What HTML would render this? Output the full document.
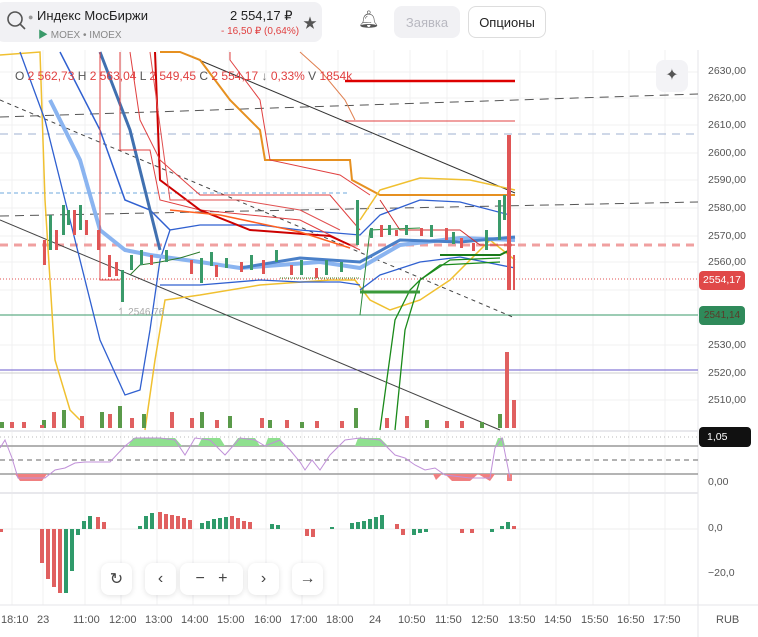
<!DOCTYPE html>
<html><head><meta charset="utf-8"><style>
*{margin:0;padding:0;box-sizing:border-box}
body{width:758px;height:637px;overflow:hidden;background:#fff;font-family:"Liberation Sans","Noto Sans CJK SC",sans-serif;position:relative}
.hdr{position:absolute;left:0;top:0;width:758px;height:50px;background:#fff}
.card{position:absolute;left:-4px;top:2px;width:326px;height:40px;background:#f1f1f4;border-radius:8px}
.btn{position:absolute;top:6px;height:32px;border-radius:8px;font-size:13px;display:flex;align-items:center;justify-content:center}
.ax{position:absolute;font-size:10.5px;color:#555;left:708px}
.tl{position:absolute;top:614px;font-size:11px;color:#555}
.nav{position:absolute;top:563px;height:32px;background:#fff;border-radius:8px;box-shadow:0 1px 6px rgba(0,0,0,.12);font-size:16px;color:#444;display:flex;align-items:center;justify-content:space-around}
</style></head><body>
<svg width="758" height="637" style="position:absolute;left:0;top:0">
<!-- grid -->
<g stroke="#f0f0f2" stroke-width="1">
<line x1="0" y1="72" x2="698" y2="72"/><line x1="0" y1="98" x2="698" y2="98"/><line x1="0" y1="125" x2="698" y2="125"/><line x1="0" y1="153" x2="698" y2="153"/><line x1="0" y1="180" x2="698" y2="180"/><line x1="0" y1="208" x2="698" y2="208"/><line x1="0" y1="236" x2="698" y2="236"/><line x1="0" y1="262" x2="698" y2="262"/><line x1="0" y1="290" x2="698" y2="290"/><line x1="0" y1="345" x2="698" y2="345"/><line x1="0" y1="373" x2="698" y2="373"/><line x1="0" y1="400" x2="698" y2="400"/>
<line x1="12" y1="50" x2="12" y2="605"/><line x1="43" y1="50" x2="43" y2="605"/><line x1="85" y1="50" x2="85" y2="605"/><line x1="121" y1="50" x2="121" y2="605"/><line x1="157" y1="50" x2="157" y2="605"/><line x1="193" y1="50" x2="193" y2="605"/><line x1="229" y1="50" x2="229" y2="605"/><line x1="266" y1="50" x2="266" y2="605"/><line x1="302" y1="50" x2="302" y2="605"/><line x1="338" y1="50" x2="338" y2="605"/><line x1="374" y1="50" x2="374" y2="605"/><line x1="410" y1="50" x2="410" y2="605"/><line x1="447" y1="50" x2="447" y2="605"/><line x1="483" y1="50" x2="483" y2="605"/><line x1="520" y1="50" x2="520" y2="605"/><line x1="556" y1="50" x2="556" y2="605"/><line x1="593" y1="50" x2="593" y2="605"/><line x1="629" y1="50" x2="629" y2="605"/><line x1="665" y1="50" x2="665" y2="605"/>
</g>
<line x1="698" y1="50" x2="698" y2="637" stroke="#e6e6ea"/>
<line x1="0" y1="605" x2="758" y2="605" stroke="#e6e6ea"/>
<line x1="0" y1="431" x2="698" y2="431" stroke="#e8e8ec" stroke-width="2"/>
<line x1="0" y1="493" x2="698" y2="493" stroke="#e8e8ec" stroke-width="2"/>
<!-- horizontal levels -->
<line x1="0" y1="134" x2="698" y2="134" stroke="#9fb0d0" stroke-dasharray="8,6"/>
<line x1="0" y1="193" x2="350" y2="193" stroke="#6fa8dc" stroke-dasharray="4,3"/>
<line x1="0" y1="245" x2="698" y2="245" stroke="#f0a0a0" stroke-width="3" stroke-dasharray="8,6"/>
<line x1="0" y1="279" x2="698" y2="279" stroke="#e05050" stroke-dasharray="1,2"/>
<line x1="0" y1="315" x2="698" y2="315" stroke="#3a9a6a"/>
<line x1="0" y1="370" x2="698" y2="370" stroke="#6a5acd"/><line x1="0" y1="373" x2="698" y2="373" stroke="#ccc"/>
<line x1="345" y1="81" x2="515" y2="81" stroke="#d00" stroke-width="2.5"/>
<line x1="345" y1="121" x2="515" y2="121" stroke="#e04040"/>
<polyline points="0,117 698,94" stroke="#555" fill="none" stroke-dasharray="9,6"/>
<polyline points="0,216 698,202" stroke="#555" fill="none" stroke-dasharray="9,6"/>
<!-- diagonal lines -->
<polyline points="180,52 515,193" stroke="#333" fill="none"/>
<polyline points="0,100 515,318" stroke="#444" fill="none" stroke-dasharray="4,4"/>
<polyline points="0,220 500,430" stroke="#444" fill="none"/>
<!-- orange -->
<polyline points="160,52 180,52 200,60 230,100 260,130 265,160 350,160 352,180 380,195 515,195" stroke="#e69020" stroke-width="2" fill="none"/>
<polyline points="300,52 320,70 345,100 355,120" stroke="#e08050" fill="none"/>
<!-- yellow bollinger -->
<polyline points="0,55 40,52 45,200 55,360 70,410 80,420" stroke="#f0c030" stroke-width="1.5" fill="none"/>
<polyline points="145,430 155,360 165,300 200,295 260,285 330,280 355,280 370,300 390,310 420,300 450,280 490,240 515,260" stroke="#f0c030" stroke-width="1.5" fill="none"/>
<polyline points="360,220 380,190 420,178 470,180 515,190" stroke="#f0c030" stroke-width="1.5" fill="none"/>
<!-- blue -->
<polyline points="20,52 45,120 75,240 100,340 125,395 140,390 150,330 160,260 170,230 200,225 260,225 300,230 360,235 380,215 420,200 460,202 510,215" stroke="#3060d0" stroke-width="1.3" fill="none"/>
<polyline points="360,290 380,275 420,262 460,257 515,268" stroke="#3060d0" stroke-width="1.3" fill="none"/>
<polyline points="160,285 200,285 260,280 300,282 340,282 360,285" stroke="#3060d0" stroke-width="1.3" fill="none"/>
<polyline points="60,52 100,130 125,200 150,210 170,230" stroke="#3060d0" stroke-width="1.5" fill="none"/>
<polyline points="100,52 130,130 160,250" stroke="#4070b0" stroke-width="3" fill="none"/>
<polyline points="50,100 80,160 100,230 125,250 150,255 200,262 240,268 280,265 320,262 360,268 400,245 460,238 515,240" stroke="#8ab4f0" stroke-width="4" fill="none"/>
<polyline points="240,268 300,258 360,262 400,240 460,242 515,237" stroke="#4a80c8" stroke-width="3" fill="none"/>
<!-- reds -->
<polyline points="100,52 100,280 120,280" stroke="#e04040" fill="none"/>
<polyline points="120,52 120,150 150,150 160,200 200,210 300,220 340,240 360,250" stroke="#e04040" fill="none"/>
<polyline points="155,52 160,180 200,210 250,230 330,236 350,245" stroke="#c00" stroke-width="2" fill="none"/>
<polyline points="150,52 170,200 240,200 300,210 340,230" stroke="#e05050" fill="none"/>
<polyline points="130,52 140,120 160,160 200,195 330,195 360,230" stroke="#e04040" fill="none"/>
<polyline points="170,210 220,215 300,232 350,248" stroke="#ff6020" stroke-width="1.5" fill="none"/>
<polyline points="230,52 230,60 260,100 270,160 340,175 370,195" stroke="#e04040" fill="none"/>
<polyline points="380,200 400,230 460,230 480,245 515,245" stroke="#d03030" fill="none"/>
<!-- greens -->
<polyline points="360,315 370,230 420,228" stroke="#2a8a3a" fill="none"/>
<polyline points="380,430 395,320 410,290 420,280 440,265 500,262" stroke="#1a8a1a" stroke-width="1.3" fill="none"/>
<polyline points="395,430 405,330 420,280 450,260 500,258" stroke="#1a8a1a" stroke-width="1.3" fill="none"/>
<polyline points="440,255 500,255 510,250" stroke="#1a7a1a" stroke-width="2" fill="none"/>
<line x1="360" y1="292" x2="420" y2="292" stroke="#3a9a3a" stroke-width="3"/>
<polyline points="130,275 140,265 160,262 180,258 200,252" stroke="#2a7a2a" fill="none"/>
<line x1="280" y1="278" x2="360" y2="278" stroke="#4a8a2a" stroke-dasharray="1,1"/>
<!-- candles -->
<g fill="#e05555">
<rect x="43" y="240" width="3" height="25"/><rect x="55" y="230" width="3" height="20"/><rect x="73" y="210" width="3" height="25"/><rect x="85" y="220" width="3" height="15"/><rect x="97" y="230" width="3" height="20"/><rect x="108" y="255" width="3" height="22"/><rect x="115" y="262" width="3" height="14"/><rect x="150" y="255" width="3" height="10"/><rect x="190" y="260" width="3" height="14"/><rect x="215" y="265" width="3" height="12"/><rect x="240" y="262" width="3" height="10"/><rect x="262" y="260" width="3" height="14"/><rect x="290" y="265" width="3" height="10"/><rect x="315" y="268" width="3" height="10"/><rect x="380" y="225" width="3" height="12"/><rect x="395" y="230" width="3" height="6"/><rect x="420" y="228" width="3" height="8"/><rect x="445" y="228" width="3" height="12"/><rect x="460" y="238" width="3" height="10"/><rect x="472" y="243" width="3" height="8"/><rect x="507" y="135" width="4" height="155"/><rect x="513" y="255" width="2" height="35"/>
</g>
<g fill="#3a9a6a">
<rect x="49" y="215" width="3" height="35"/><rect x="62" y="205" width="3" height="30"/><rect x="67" y="210" width="3" height="15"/><rect x="79" y="205" width="3" height="25"/><rect x="121" y="270" width="3" height="32"/><rect x="130" y="255" width="3" height="15"/><rect x="140" y="250" width="3" height="15"/><rect x="165" y="250" width="3" height="12"/><rect x="200" y="258" width="3" height="25"/><rect x="210" y="252" width="3" height="14"/><rect x="225" y="258" width="3" height="10"/><rect x="250" y="255" width="3" height="15"/><rect x="275" y="250" width="3" height="12"/><rect x="300" y="260" width="3" height="15"/><rect x="325" y="260" width="3" height="15"/><rect x="340" y="262" width="3" height="10"/><rect x="356" y="200" width="3" height="45"/><rect x="370" y="228" width="3" height="10"/><rect x="388" y="225" width="3" height="10"/><rect x="405" y="225" width="3" height="10"/><rect x="430" y="225" width="3" height="12"/><rect x="452" y="232" width="3" height="12"/><rect x="485" y="230" width="3" height="20"/><rect x="498" y="200" width="3" height="40"/><rect x="503" y="195" width="3" height="25"/>
</g>
<!-- volume -->
<g fill="#5a9a4a">
<rect x="0" y="422" width="4" height="6"/><rect x="42" y="420" width="4" height="8"/><rect x="62" y="410" width="4" height="18"/><rect x="100" y="412" width="4" height="16"/><rect x="118" y="406" width="4" height="22"/><rect x="142" y="414" width="4" height="14"/><rect x="200" y="412" width="4" height="16"/><rect x="228" y="416" width="4" height="12"/><rect x="268" y="420" width="4" height="8"/><rect x="300" y="422" width="4" height="6"/><rect x="354" y="408" width="4" height="20"/><rect x="425" y="420" width="4" height="8"/><rect x="480" y="422" width="4" height="6"/><rect x="498" y="414" width="4" height="14"/>
</g>
<g fill="#e06060">
<rect x="10" y="422" width="4" height="6"/><rect x="22" y="422" width="4" height="6"/><rect x="40" y="425" width="4" height="3"/><rect x="52" y="412" width="4" height="16"/><rect x="80" y="416" width="4" height="12"/><rect x="108" y="414" width="4" height="14"/><rect x="130" y="418" width="4" height="10"/><rect x="170" y="412" width="4" height="16"/><rect x="190" y="418" width="4" height="10"/><rect x="215" y="420" width="4" height="8"/><rect x="260" y="418" width="4" height="10"/><rect x="285" y="420" width="4" height="8"/><rect x="315" y="421" width="4" height="7"/><rect x="340" y="421" width="4" height="7"/><rect x="385" y="418" width="4" height="10"/><rect x="405" y="416" width="4" height="12"/><rect x="445" y="421" width="4" height="7"/><rect x="460" y="421" width="4" height="7"/><rect x="505" y="352" width="4" height="76"/><rect x="512" y="400" width="4" height="28"/>
</g>
<!-- RSI -->
<line x1="0" y1="437" x2="698" y2="437" stroke="#bbb" stroke-dasharray="1,3"/>
<line x1="0" y1="446" x2="698" y2="446" stroke="#999" stroke-width="1.5"/>
<line x1="0" y1="460" x2="698" y2="460" stroke="#999" stroke-width="1.5" stroke-dasharray="5,4"/>
<line x1="0" y1="474" x2="698" y2="474" stroke="#888" stroke-width="1.2"/>
<g fill="#8fe08f"><polygon points="128,446 133,438 175,438 182,446"/><polygon points="198,446 202,438 220,438 225,446"/><polygon points="232,446 238,438 255,438 260,446"/><polygon points="265,446 268,438 280,438 284,446"/><polygon points="355,446 358,438 380,438 388,446"/><polygon points="495,446 498,438 503,438 505,446"/></g>
<g fill="#f08080"><polygon points="15,474 20,481 42,481 47,474"/><polygon points="433,474 436,480 442,474"/><polygon points="445,474 452,481 470,481 478,474 490,481 495,474"/><polygon points="507,474 507,481 512,481 512,474"/></g>
<polyline points="0,448 5,440 12,458 18,478 45,478 55,470 65,468 75,463 85,462 95,462 110,462 125,446 135,438 150,438 160,438 175,440 185,455 195,438 210,440 225,455 240,438 255,440 265,446 280,440 290,450 300,462 305,470 312,460 320,470 330,455 345,440 360,438 380,440 395,455 405,458 415,465 425,470 435,468 445,475 470,478 490,478 495,448 502,438 510,478" stroke="#c090d8" fill="none"/>
<!-- MACD -->
<line x1="0" y1="529" x2="698" y2="529" stroke="#eee"/>
<g fill="#e06060">
<rect x="0" y="529" width="3" height="3"/><rect x="40" y="529" width="4" height="34"/><rect x="46" y="529" width="4" height="50"/><rect x="52" y="529" width="4" height="58"/><rect x="58" y="529" width="4" height="64"/><rect x="96" y="517" width="4" height="12"/><rect x="102" y="522" width="4" height="7"/><rect x="158" y="512" width="4" height="17"/><rect x="164" y="514" width="4" height="15"/><rect x="170" y="515" width="4" height="14"/><rect x="176" y="516" width="4" height="13"/><rect x="182" y="518" width="4" height="11"/><rect x="188" y="520" width="4" height="9"/><rect x="230" y="516" width="4" height="13"/><rect x="236" y="518" width="4" height="11"/><rect x="242" y="521" width="4" height="8"/><rect x="248" y="522" width="4" height="7"/><rect x="305" y="529" width="4" height="7"/><rect x="311" y="529" width="4" height="8"/><rect x="395" y="524" width="4" height="5"/><rect x="401" y="529" width="4" height="6"/><rect x="460" y="529" width="4" height="4"/><rect x="470" y="529" width="4" height="4"/><rect x="512" y="526" width="4" height="3"/>
</g>
<g fill="#2f9a6a">
<rect x="64" y="529" width="4" height="64"/><rect x="70" y="529" width="4" height="42"/><rect x="76" y="529" width="4" height="6"/><rect x="82" y="521" width="4" height="8"/><rect x="88" y="516" width="4" height="13"/><rect x="138" y="526" width="4" height="3"/><rect x="144" y="516" width="4" height="13"/><rect x="150" y="513" width="4" height="16"/><rect x="200" y="523" width="4" height="6"/><rect x="206" y="521" width="4" height="8"/><rect x="212" y="519" width="4" height="10"/><rect x="218" y="518" width="4" height="11"/><rect x="224" y="517" width="4" height="12"/><rect x="270" y="524" width="4" height="5"/><rect x="276" y="525" width="4" height="4"/><rect x="330" y="527" width="4" height="2"/><rect x="350" y="523" width="4" height="6"/><rect x="356" y="522" width="4" height="7"/><rect x="362" y="521" width="4" height="8"/><rect x="368" y="519" width="4" height="10"/><rect x="374" y="517" width="4" height="12"/><rect x="380" y="515" width="4" height="14"/><rect x="412" y="529" width="4" height="6"/><rect x="418" y="529" width="4" height="4"/><rect x="424" y="529" width="4" height="3"/><rect x="490" y="529" width="4" height="3"/><rect x="500" y="526" width="4" height="3"/><rect x="506" y="522" width="4" height="7"/>
</g>
</svg>
<div class="hdr">
<div class="card">
<svg width="22" height="22" style="position:absolute;left:9px;top:7px"><circle cx="10" cy="10" r="7" stroke="#555" stroke-width="1.6" fill="none"/><line x1="15" y1="15" x2="20" y2="20" stroke="#555" stroke-width="1.6"/></svg>
<div style="position:absolute;left:32px;top:6px;font-size:13px;color:#222"><span style="font-size:9px;color:#999">&#9679;</span> Индекс МосБиржи</div>
<div style="position:absolute;left:42px;top:24px;font-size:10px;color:#888"><span style="color:#3a9a6a">&#9654;</span> MOEX • IMOEX</div>
<div style="position:absolute;left:234px;top:6px;font-size:13px;color:#222">2 554,17 ₽</div>
<div style="position:absolute;left:225px;top:24px;font-size:10px;color:#e04040">- 16,50 ₽ (0,64%)</div>
<div style="position:absolute;left:307px;top:11px;font-size:14px;color:#555">★</div>
</div>
<div style="position:absolute;left:358px;top:10px;font-size:17px;color:#555">🔔︎</div>
<div class="btn" style="left:394px;width:66px;background:#f1f1f4;color:#b8b8c0">Заявка</div>
<div class="btn" style="left:468px;width:78px;border:1px solid #ddd;color:#222">Опционы</div>
</div>
<div style="position:absolute;left:15px;top:69px;font-size:12px;color:#555">O <span style="color:#e04040">2 562,73</span> H <span style="color:#e04040">2 563,04</span> L <span style="color:#e04040">2 549,45</span> C <span style="color:#e04040">2 554,17</span> <span style="color:#777">↓</span><span style="color:#e04040"> 0,33%</span> V <span style="color:#e04040">1854k</span></div>
<div style="position:absolute;left:656px;top:60px;width:32px;height:32px;background:#f3f3f6;border-radius:8px;font-size:16px;color:#555;text-align:center;line-height:32px">✦</div>
<div style="position:absolute;left:117px;top:307px;font-size:10px;color:#aaa">↿ 2546,76</div>
<div class="ax" style="top:65px">2630,00</div><div class="ax" style="top:92px">2620,00</div><div class="ax" style="top:119px">2610,00</div><div class="ax" style="top:147px">2600,00</div><div class="ax" style="top:174px">2590,00</div><div class="ax" style="top:202px">2580,00</div><div class="ax" style="top:230px">2570,00</div><div class="ax" style="top:256px">2560,00</div><div class="ax" style="top:339px">2530,00</div><div class="ax" style="top:367px">2520,00</div><div class="ax" style="top:394px">2510,00</div><div class="ax" style="top:476px">0,00</div><div class="ax" style="top:522px">0,0</div><div class="ax" style="top:567px">−20,0</div>
<div style="position:absolute;left:699px;top:271px;width:46px;height:19px;background:#e04848;border-radius:4px;color:#fff;font-size:10.5px;line-height:19px;text-align:center">2554,17</div>
<div style="position:absolute;left:699px;top:306px;width:46px;height:19px;background:#2f8a5a;border-radius:4px;color:#5a3a2a;font-size:10px;line-height:19px;text-align:center">2541,14</div>
<div style="position:absolute;left:699px;top:427px;width:52px;height:20px;background:#111;border-radius:4px;color:#fff;font-size:10.5px;line-height:20px;padding-left:8px">1,05</div>
<div class="nav" style="left:101px;width:31px">↻</div>
<div class="nav" style="left:145px;width:31px">‹</div>
<div class="nav" style="left:180px;width:63px">− &nbsp;&nbsp;+</div>
<div class="nav" style="left:248px;width:31px">›</div>
<div class="nav" style="left:292px;width:31px">→</div>
<div class="tl" style="left:1px">18:10</div><div class="tl" style="left:37px">23</div><div class="tl" style="left:73px">11:00</div><div class="tl" style="left:109px">12:00</div><div class="tl" style="left:145px">13:00</div><div class="tl" style="left:181px">14:00</div><div class="tl" style="left:217px">15:00</div><div class="tl" style="left:254px">16:00</div><div class="tl" style="left:290px">17:00</div><div class="tl" style="left:326px">18:00</div><div class="tl" style="left:369px">24</div><div class="tl" style="left:398px">10:50</div><div class="tl" style="left:435px">11:50</div><div class="tl" style="left:471px">12:50</div><div class="tl" style="left:508px">13:50</div><div class="tl" style="left:544px">14:50</div><div class="tl" style="left:581px">15:50</div><div class="tl" style="left:617px">16:50</div><div class="tl" style="left:653px">17:50</div><div class="tl" style="left:716px">RUB</div>
</body></html>
